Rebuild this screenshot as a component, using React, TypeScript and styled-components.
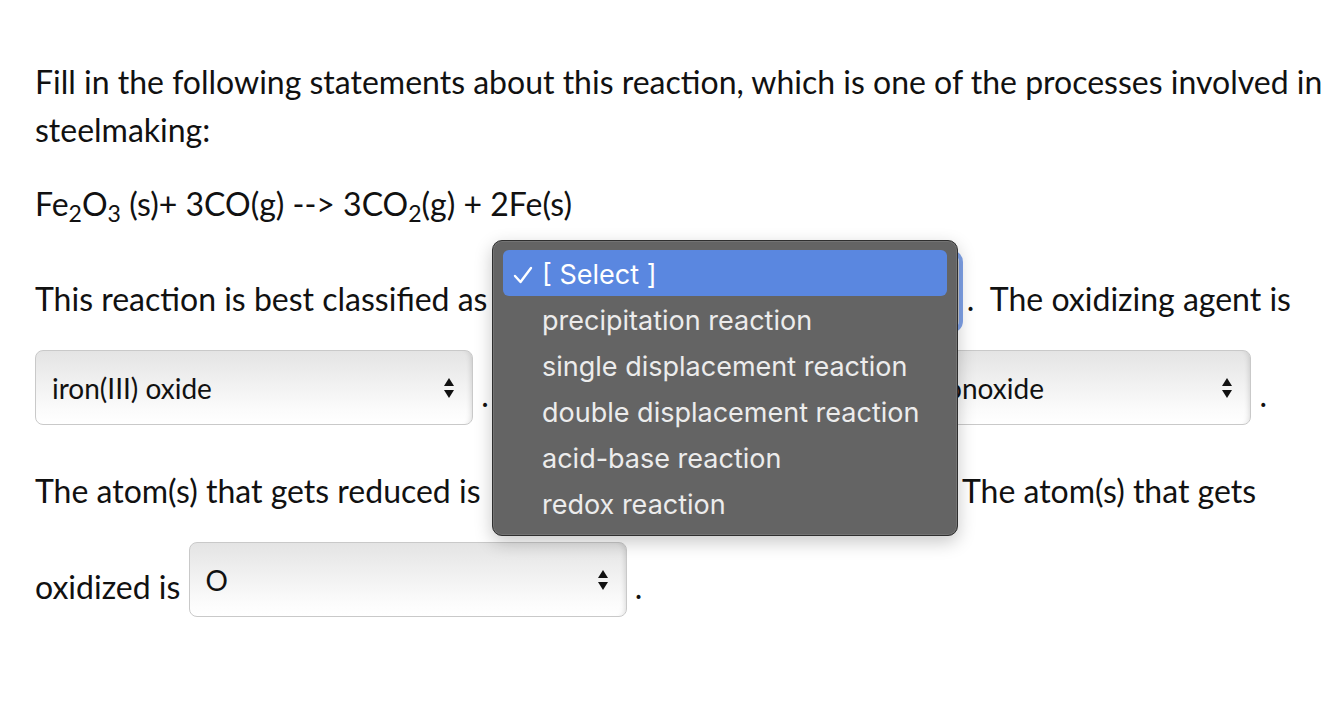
import * as React from 'react';
import styled, { createGlobalStyle } from 'styled-components';

const GlobalStyle = createGlobalStyle`
  html, body {
    margin: 0;
    padding: 0;
    background: #ffffff;
  }
  body {
    font-family: Lato, "Open Sans", sans-serif;
    color: #111;
  }
`;

const Page = styled.div`
  position: relative;
  width: 1290px;
  padding: 58px 0 0 35px;
  font-size: 32px;
  line-height: 48px;
`;

const Para = styled.p<{ $top: number }>`
  margin: ${(p) => p.$top}px 0 0;
`;

const Keep = styled.span`
  white-space: nowrap;
`;

const Sub = styled.sub`
  font-size: 0.72em;
  line-height: 0;
  vertical-align: -0.28em;
`;

const Select = styled.span<{ $w: number; $ml?: number; $focus?: boolean }>`
  display: inline-block;
  box-sizing: border-box;
  width: ${(p) => p.$w}px;
  height: 75px;
  margin: 10px 0 11px ${(p) => (p.$ml === undefined ? 3 : p.$ml)}px;
  vertical-align: -29px;
  overflow: hidden;
  white-space: nowrap;
  border: 1px solid #c9c9c9;
  border-radius: 8px;
  background: linear-gradient(to bottom, #e4e4e4 0%, #f1f1f1 45%, #fbfbfb 80%, #ffffff 100%);
  box-shadow: inset -6px 0 6px -6px rgba(0, 0, 0, 0.18);
  ${(p) => (p.$focus ? 'outline: 4px solid #7fa2e8; outline-offset: 0;' : '')}
`;

const SelectInner = styled.span`
  display: flex;
  align-items: center;
  justify-content: space-between;
  height: 100%;
  padding: 0 17px 0 16px;
  font-size: 28px;
  line-height: 1;
  color: #111;
`;

const Arrows = styled.svg`
  flex: none;
  width: 12px;
  height: 22px;
`;

const Popup = styled.div`
  position: absolute;
  left: 492px;
  top: 240px;
  box-sizing: border-box;
  width: 466px;
  height: 296px;
  padding: 9px 10px;
  background: #646464;
  border: 1px solid #2f2f2f;
  border-radius: 10px;
  box-shadow: inset 0 0 0 1px rgba(255, 255, 255, 0.1), 0 6px 18px rgba(0, 0, 0, 0.22);
  font-family: Inter, Roboto, "Liberation Sans", sans-serif;
  font-size: 27px;
`;

const Option = styled.div<{ $active?: boolean }>`
  display: flex;
  align-items: center;
  box-sizing: border-box;
  height: 46px;
  padding: 4px 0 0 10px;
  border-radius: 6px;
  color: ${(p) => (p.$active ? '#ffffff' : '#ececec')};
  background: ${(p) => (p.$active ? '#5a87e0' : 'transparent')};
  white-space: nowrap;
`;

const Check = styled.span`
  display: inline-flex;
  width: 29px;
  flex: none;
`;

function Dropdown({ value, w, ml, focus }: { value: string; w: number; ml?: number; focus?: boolean }) {
  return (
    <Select $w={w} $ml={ml} $focus={focus}>
      <SelectInner>
        <span>{value}</span>
        <Arrows viewBox="0 0 12 22">
          <path d="M6 1 L11 9 L1 9 Z" fill="#111" />
          <path d="M1 13 L11 13 L6 21 Z" fill="#111" />
        </Arrows>
      </SelectInner>
    </Select>
  );
}

const options = [
  'precipitation reaction',
  'single displacement reaction',
  'double displacement reaction',
  'acid-base reaction',
  'redox reaction',
];

export default function App() {
  return (
    <>
      <GlobalStyle />
      <Page>
        <Para $top={0}>
          Fill in the following statements about this reaction, which is one of the processes involved in
          steelmaking:
        </Para>
        <Para $top={26}>
          Fe<Sub>2</Sub>O<Sub>3</Sub> (s)+ 3CO(g) --&gt; 3CO<Sub>2</Sub>(g) + 2Fe(s)
        </Para>
        <Para $top={16}>
          This reaction is best classified as <Dropdown value="[ Select ]" w={460} focus /> .{'\u00a0'} The
          oxidizing agent is <Dropdown value="iron(III) oxide" w={438} ml={0} /> .{'\u00a0'} The reducing agent
          is <Dropdown value="carbon monoxide" w={437} ml={3} /> .{' '}
          <Keep>The atom(s) that gets reduced is</Keep> <Dropdown value="Fe" w={439} /> .{'\u00a0'} The atom(s)
          that gets oxidized is <Dropdown value="O" w={438} ml={0} /> .
        </Para>
        <Popup>
          <Option $active>
            <Check>
              <svg width="20" height="18" viewBox="0 0 20 18">
                <path d="M2 10 L7.5 16 L18 2" fill="none" stroke="#fff" strokeWidth="2.4" strokeLinecap="round" strokeLinejoin="round" />
              </svg>
            </Check>
            [ Select ]
          </Option>
          {options.map((o) => (
            <Option key={o}>
              <Check />
              {o}
            </Option>
          ))}
        </Popup>
      </Page>
    </>
  );
}
